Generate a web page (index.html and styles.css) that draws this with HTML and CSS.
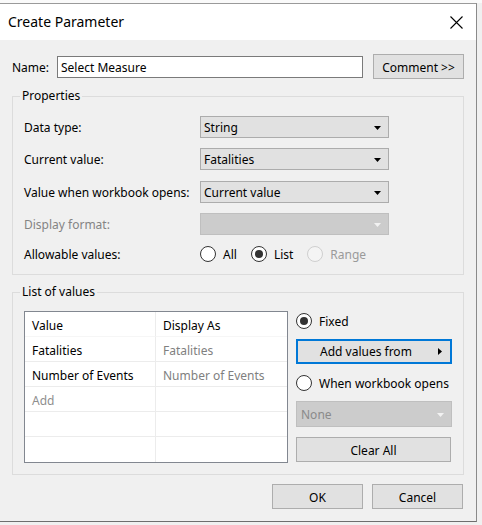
FILE: index.html
```html
<!DOCTYPE html>
<html>
<head>
<meta charset="utf-8">
<link rel="stylesheet" href="styles.css">
</head>
<body>
<div class="strip"></div>
<div class="dialog">
  <div class="titlebar">
    <span class="title">Create Parameter</span>
    <svg class="close" width="13" height="13" viewBox="0 0 13 13"><path d="M0.5 0.5L12.5 12.5M12.5 0.5L0.5 12.5" stroke="#000" stroke-width="1.1" fill="none"/></svg>
  </div>
  <div class="content">
    <div class="name-row">
      <span class="name-label">Name:</span>
      <div class="input">Select Measure</div>
      <div class="btn comment">Comment &gt;&gt;</div>
    </div>

    <fieldset class="group props">
      <legend>Properties</legend>
      <div class="prop-row r1">
        <span class="plabel">Data type:</span>
        <div class="select"><span>String</span><svg class="caret" width="7" height="4" viewBox="0 0 7 4"><path d="M0 0H7L3.5 4Z"/></svg></div>
      </div>
      <div class="prop-row r2">
        <span class="plabel">Current value:</span>
        <div class="select"><span>Fatalities</span><svg class="caret" width="7" height="4" viewBox="0 0 7 4"><path d="M0 0H7L3.5 4Z"/></svg></div>
      </div>
      <div class="prop-row r3">
        <span class="plabel">Value when workbook opens:</span>
        <div class="select"><span>Current value</span><svg class="caret" width="7" height="4" viewBox="0 0 7 4"><path d="M0 0H7L3.5 4Z"/></svg></div>
      </div>
      <div class="prop-row r4">
        <span class="plabel disabled">Display format:</span>
        <div class="select off"><span></span><svg class="caret" width="7" height="4" viewBox="0 0 7 4"><path d="M0 0H7L3.5 4Z"/></svg></div>
      </div>
      <div class="prop-row r5">
        <span class="plabel">Allowable values:</span>
        <div class="radios">
          <span class="opt"><span class="radio"></span>All</span>
          <span class="opt"><span class="radio on"></span>List</span>
          <span class="opt dis"><span class="radio"></span>Range</span>
        </div>
      </div>
    </fieldset>

    <fieldset class="group list">
      <legend>List of values</legend>
      <div class="list-body">
        <div class="table">
          <div class="cell head">Value</div><div class="cell head">Display As</div>
          <div class="cell">Fatalities</div><div class="cell muted">Fatalities</div>
          <div class="cell">Number of Events</div><div class="cell muted">Number of Events</div>
          <div class="cell add">Add</div><div class="cell"></div>
          <div class="cell"></div><div class="cell"></div>
          <div class="cell last"></div><div class="cell last"></div>
        </div>
        <div class="side">
          <div class="opt side-opt first"><span class="radio on"></span>Fixed</div>
          <div class="btn addfrom"><span>Add values from</span><svg width="4" height="7" viewBox="0 0 4 7"><path d="M0 0L4 3.5L0 7Z"/></svg></div>
          <div class="opt side-opt second"><span class="radio"></span>When workbook opens</div>
          <div class="select off none"><span>None</span><svg class="caret" width="7" height="4" viewBox="0 0 7 4"><path d="M0 0H7L3.5 4Z"/></svg></div>
          <div class="btn clear">Clear All</div>
        </div>
      </div>
    </fieldset>

    <div class="footer">
      <div class="btn action">OK</div>
      <div class="btn action">Cancel</div>
    </div>
  </div>
</div>
</body>
</html>
```

FILE: styles.css
```css
* { box-sizing: border-box; }
html, body { margin: 0; padding: 0; }
body {
  background: #f0f0f0;
  font-family: "Noto Sans", "Open Sans", sans-serif;
  font-size: 12px;
  color: #000;
  width: 482px;
  height: 525px;
  overflow: hidden;
}
.strip {
  height: 3px;
  background: #fafafa;
}
.dialog {
  width: 477px;
  background: #f0f0f0;
  border-top: 1px solid #9a9a9a;
  border-right: 1px solid #8a8a8a;
  border-bottom: 1px solid #6e6e6e;
}
.titlebar {
  height: 36px;
  background: #fff;
  display: flex;
  align-items: center;
  justify-content: space-between;
  padding: 0 13px 0 8px;
}
.title {
  font-size: 14px;
  line-height: 20px;
}
.close { display: block; }

.content {
  padding: 14px 12px 12px 12px;
}
.name-row {
  display: flex;
  align-items: center;
  height: 25px;
}
.name-label { width: 45px; padding-top: 1px; }
.input {
  width: 306px;
  height: 22px;
  background: #fff;
  border: 1px solid #7a7a7a;
  padding: 1px 3px 0 3px;
  line-height: 19px;
}
.btn {
  background: #e1e1e1;
  border: 1px solid #adadad;
  height: 25px;
  display: flex;
  align-items: center;
  justify-content: center;
  padding-top: 1px;
}
.comment {
  width: 91px;
  margin-left: auto;
}

.group {
  margin: 9px 0 0 0;
  border: 1px solid #dcdcdc;
  padding: 12px 11px 9px 11px;
  min-width: 0;
}
.group legend {
  margin-left: -4px;
  padding: 0 2px;
  line-height: 16px;
  height: 16px;
}
.prop-row {
  display: flex;
  align-items: center;
  height: 22px;
}
.r1 { margin-bottom: 10px; }
.r2 { margin-bottom: 11px; }
.r3 { margin-bottom: 10px; }
.r4 { margin-bottom: 8px; }
.plabel { width: 176px; padding-top: 1px; }
.plabel.disabled { color: #848484; }
.select {
  width: 189px;
  height: 22px;
  background: #e1e1e1;
  border: 1px solid #acacac;
  display: flex;
  align-items: center;
  justify-content: space-between;
  padding: 1px 7px 0 3px;
}
.select.off {
  background: #cccccc;
  border-color: #bfbfbf;
  color: #8a8a8a;
}
.select.off .caret path { fill: #f2f2f2; }
.caret path { fill: #000; }

.radios { display: flex; align-items: center; }
.opt {
  display: flex;
  align-items: center;
}
.radios .opt { margin-right: 14px; }
.radio {
  width: 16px;
  height: 16px;
  border-radius: 50%;
  border: 1px solid #333;
  background: #fff;
  margin-right: 7px;
  display: flex;
  align-items: center;
  justify-content: center;
}
.radio.on::after {
  content: "";
  width: 8px;
  height: 8px;
  border-radius: 50%;
  background: #333;
}
.opt.dis { color: #9a9a9a; }
.opt.dis .radio { border-color: #cfcfcf; background: #f4f4f4; }

.list { padding: 11px 11px 11px 11px; }
.list-body {
  display: flex;
  gap: 8px;
}
.table {
  width: 264px;
  height: 152px;
  border: 1px solid #828790;
  background: #fff;
  display: grid;
  grid-template-columns: 131px 1fr;
  grid-auto-rows: 25px;
}
.cell {
  border-bottom: 1px solid #ececec;
  padding: 4px 7px 0 7px;
  line-height: 20px;
  white-space: nowrap;
}
.cell:nth-child(odd) { border-right: 1px solid #ececec; }
.cell.head { border-bottom-color: #f6f6f6; }
.cell.last { border-bottom: none; }
.cell.muted { color: #808080; }
.cell.add { color: #8e8e8e; }

.side {
  width: 156px;
  display: flex;
  flex-direction: column;
}
.side-opt { height: 20px; }
.addfrom {
  margin-top: 8px;
  border: 2px solid #0078d7;
  justify-content: space-between;
  padding: 0 8px 0 22px;
}
.addfrom svg path { fill: #000; }
.side-opt.second { margin-top: 9px; }
.none {
  width: 156px;
  height: 26px;
  margin-top: 8px;
  padding-left: 4px;
}
.clear {
  margin-top: 10px;
  width: 155px;
}

.footer {
  display: flex;
  justify-content: flex-end;
  gap: 9px;
  margin-top: 9px;
  padding-right: 1px;
}
.action { width: 91px; }
```
